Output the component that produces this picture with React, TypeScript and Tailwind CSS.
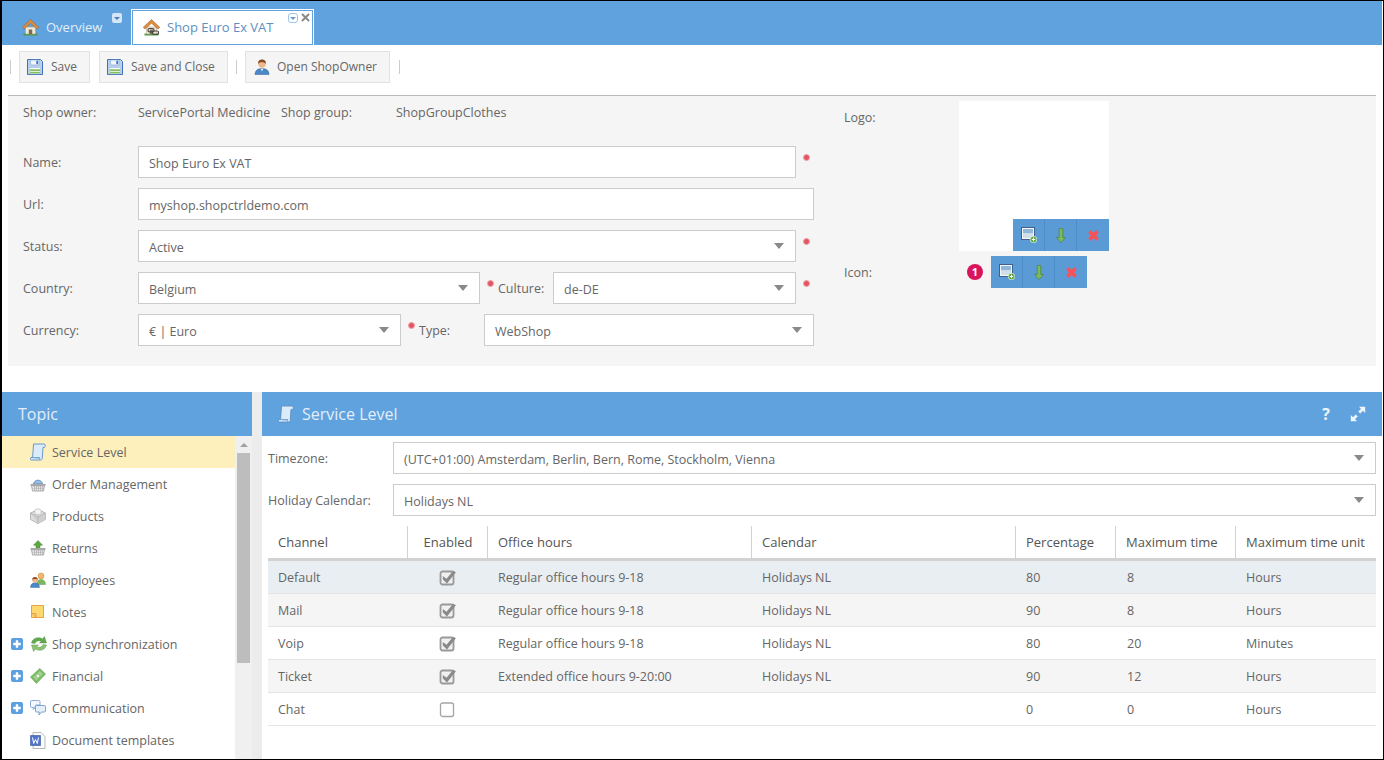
import React from "react";

const Home = ({ chain = false }: { chain?: boolean }) => (
  <svg width="17" height="17" viewBox="0 0 17 17" className="shrink-0">
    <path d="M1.500 14.500h14V16.500h-14z" fill="#4f9a3c" />
    <path d="M3.500 8h10v7h-10z" fill="#efe8d6" stroke="#a99a7e" strokeWidth=".5" />
    <path d="M6.800 10.500h3.400V15H6.800z" fill="#7d6c55" />
    <path d="M8.500 .5.300 8.300l1.600 1.800L8.500 4.200l6.600 5.900 1.600-1.800z" fill="#dd8f3f" stroke="#a5622a" strokeWidth=".6" />
    {chain && (
      <g fill="none" stroke="#4a4a4a" strokeWidth="1.200">
        <rect x="5" y="9.500" width="6" height="3.400" rx="1.400" />
        <rect x="9.500" y="12" width="6" height="3.400" rx="1.400" />
      </g>
    )}
  </svg>
);

const Floppy = () => (
  <svg width="16" height="16" viewBox="0 0 16 16" className="shrink-0">
    <path d="M.5.500h13l2 2v13H.5z" fill="#b9d2ee" stroke="#3f70b8" />
    <path d="M3.500 1h8.500v5H3.500z" fill="#f2f7fd" stroke="#7ea0d0" strokeWidth=".6" />
    <path d="M9.300 1.800h1.800v3.300H9.300z" fill="#3f70b8" />
    <path d="M2.500 8.500h11V15h-11z" fill="#fff" stroke="#8fb0da" strokeWidth=".5" />
    <path d="M3 10.200h10V12H3zM3 12.800h10V14.500H3z" fill="#84c062" />
  </svg>
);

const Person = () => (
  <svg width="16" height="16" viewBox="0 0 16 16" className="shrink-0">
    <path d="M1 15.500c0-4 2.700-6 7-6s7 2 7 6z" fill="#4a86c8" stroke="#2f5f9c" strokeWidth=".5" />
    <path d="M6.500 9.500 8 12.500l1.500-3z" fill="#e8eef6" />
    <circle cx="8" cy="5" r="3.700" fill="#eeb98a" />
    <path d="M4.200 5.200C3.800 1.600 6 .6 8 .6s4.200 1 3.800 4.600C11 3.600 9.500 3 8 3.300 6.500 3 5 3.600 4.200 5.200z" fill="#8a4a24" />
  </svg>
);

const Scroll = () => (
  <svg width="16" height="18" viewBox="0 0 16 18" className="shrink-0">
    <path d="M3.500 1H14c1.700 0 1.700 2.600.5 3.400H13L12.300 15.300c-.2 1.200-1 1.700-2 1.700H1.200c-1 0-1-2.200-.1-2.600H2.600z" fill="#dcebfa" stroke="#5b8ec6" strokeWidth=".9" />
    <path d="M1.200 14.500h8.600c-.6.800-.4 1.800 0 2.500" fill="#aecbec" stroke="#5b8ec6" strokeWidth=".7" />
  </svg>
);

const Basket = ({ up = false }: { up?: boolean }) => (
  <svg width="16" height="16" viewBox="0 0 16 16" className="shrink-0">
    {up ? (
      <path d="M8 .5 12.500 5.200H10V9H6V5.200H3.500z" fill="#5aa83f" stroke="#3f7d2b" strokeWidth=".5" />
    ) : (
      <path d="M3.500 8c.5-2.500 2.300-3.800 4.500-3.800S12 5.500 12.500 8z" fill="#9fbfe0" stroke="#5b8fc4" strokeWidth="1" />
    )}
    <path d="M.5 8h15v1.800H.5z" fill="#a9a9a9" />
    <path d="M1.500 9.800h13L13.500 15h-11z" fill="#ececec" stroke="#8d8d8d" strokeWidth=".7" />
    <path d="M4.500 10v5M6.500 10v5M8.500 10v5M10.500 10v5M12.500 10v5M2.500 12.300h11" stroke="#a5a5a5" strokeWidth=".6" />
  </svg>
);

const BoxIcon = () => (
  <svg width="16" height="16" viewBox="0 0 16 16" className="shrink-0">
    <path d="M8 1.500 15.500 5v6.500L8 15.500.5 11.500V5z" fill="#dfdfdf" stroke="#a8a8a8" strokeWidth=".8" />
    <path d="M.5 5 8 8.800 15.500 5V11.500L8 15.500z" fill="#cfcfcf" />
    <path d="M.5 5 8 8.800l7.500-3.800M8 8.800v6.700" fill="none" stroke="#acacac" strokeWidth=".7" />
    <path d="M4.800 2.800C4.800 1.500 6.300 1 8 1s3.200.5 3.200 1.800V5c0 1-1.500 1.700-3.200 1.700S4.800 6 4.800 5z" fill="#f4f4f4" stroke="#b0b0b0" strokeWidth=".6" />
  </svg>
);

const Employees = () => (
  <svg width="16" height="16" viewBox="0 0 16 16" className="shrink-0">
    <path d="M7 11.500c0-2.500 1.500-4 4-4s4 1.500 4.500 4v1H8z" fill="#7db860" stroke="#568c3f" strokeWidth=".4" />
    <circle cx="11" cy="4" r="3" fill="#efb86d" stroke="#c98a3a" strokeWidth=".5" />
    <path d="M.5 15.500c0-3 1.800-4.800 4.500-4.800s4.500 1.800 4.500 4.800z" fill="#4a86c8" stroke="#2f5f9c" strokeWidth=".4" />
    <circle cx="5" cy="8" r="2.800" fill="#eeb98a" />
    <path d="M2.200 8C2 6 3.500 5 5 5s3 1 2.800 3C7 6.800 3 6.800 2.200 8z" fill="#8a4a24" />
  </svg>
);

const Note = () => (
  <svg width="16" height="16" viewBox="0 0 16 16" className="shrink-0">
    <path d="M1.500 1.500h12v12h-12z" fill="#fbd96e" stroke="#e9a04a" />
    <path d="M2 9.500l4 4V9.500z" fill="#f9c48a" stroke="#e0872e" strokeWidth=".6" />
  </svg>
);

const Sync = () => (
  <svg width="18" height="16" viewBox="0 0 18 16" className="shrink-0">
    <path d="M1.500 7C2.500 3 6 1.500 9 1.800c1.500 0 2.500.5 3.500 1.200L14.500.5 16.500 7H9.500l1.700-1.800C9 4 5.500 5 5 7.500z" fill="#62a94e" stroke="#4a8c3a" strokeWidth=".4" />
    <path d="M16.500 9c-1 4-4.500 5.500-7.500 5.200-1.500 0-2.500-.5-3.500-1.200L3.500 15.500 1.500 9h7L6.800 10.800C9 12 12.500 11 13 8.500z" fill="#8cc474" stroke="#4a8c3a" strokeWidth=".4" />
  </svg>
);

const Money = () => (
  <svg width="16" height="16" viewBox="0 0 17 17" className="shrink-0">
    <path d="M.5 9.500 10.500.5l6 6L6.800 16.500z" fill="#7fbe6a" stroke="#5d9c4a" strokeWidth=".6" />
    <path d="M3 9.500l7.500-6.800 3.700 3.700-7.500 7.500z" fill="#a3d590" stroke="#6fae5a" strokeWidth=".6" />
    <circle cx="8.500" cy="8.500" r="2" fill="#e8f6e0" stroke="#5d9c4a" strokeWidth=".5" />
  </svg>
);

const Chat = () => (
  <svg width="16" height="16" viewBox="0 0 16 16" className="shrink-0">
    <path d="M1.800.5h7c.8 0 1.200.5 1.200 1.200V5H6.500C5.500 5 5 5.500 5 6.500V8L3 9.500 3.500 7.500H1.800C1 7.500.5 7 .5 6.300V1.700C.5 1 1 .5 1.800.5z" fill="#f4f8fd" stroke="#6f9bcb" strokeWidth=".8" />
    <path d="M6.500 5.500h8c.6 0 1 .4 1 1v4.500c0 .6-.4 1-1 1h-3l-2.500 3 .3-3H6.500c-.6 0-1-.4-1-1V6.500c0-.6.4-1 1-1z" fill="#e4eff9" stroke="#5f8fc4" strokeWidth=".8" />
  </svg>
);

const DocIcon = () => (
  <svg width="16" height="17" viewBox="0 0 16 17" className="shrink-0">
    <path d="M3 .5h8l4 4v12H3z" fill="#fafafa" stroke="#b8b8b8" />
    <path d="M.5 3.500h10v10H.5z" fill="#4f74c9" stroke="#34539c" strokeWidth=".6" />
    <path d="M2.500 5.500l1.200 6 1.800-4 1.800 4 1.200-6" fill="none" stroke="#fff" strokeWidth="1" />
  </svg>
);

const Plus = () => (
  <svg width="12" height="12" viewBox="0 0 12 12" className="shrink-0">
    <rect width="12" height="12" rx="2" fill="#5b9fe0" />
    <path d="M4.800 2.200h2.400v2.600h2.600v2.400H7.200v2.600H4.800V7.200H2.200V4.800h2.600z" fill="#fff" />
  </svg>
);

const ImageAdd = () => (
  <svg width="16" height="16" viewBox="0 0 16 16">
    <rect x=".5" y=".5" width="13" height="12" fill="#f4f8fc" stroke="#3e5f8f" />
    <rect x="2" y="2" width="10" height="4.500" fill="#8fb7da" />
    <rect x="2" y="6.500" width="10" height="4.500" fill="#d2dfe8" />
    <circle cx="12.500" cy="12.500" r="3.300" fill="#5aa83f" stroke="#fff" strokeWidth=".6" />
    <path d="M12 10.800h1v1.200h1.200v1H13v1.200h-1V13h-1.200v-1H12z" fill="#fff" />
  </svg>
);

const DownArrow = () => (
  <svg width="10" height="15" viewBox="0 0 10 15">
    <path d="M3.200.5h3.600V9.500H9.500L5 14.500.5 9.500h2.700z" fill="#7cba5c" stroke="#3f7d2b" strokeWidth=".6" />
  </svg>
);

const RedX = () => (
  <svg width="11" height="11" viewBox="0 0 11 11">
    <path d="M2.500.2 5.500 2.800 8.500.2l2.300 2.300L8.200 5.500l2.600 3-2.300 2.300-3-2.600-3 2.600L.2 8.500l2.600-3L.2 2.500z" fill="#f5525a" />
  </svg>
);

const Caret = () => (
  <svg width="10" height="6" viewBox="0 0 10 6" className="shrink-0">
    <path d="M0 0h10L5 6z" fill="#8a8a8a" />
  </svg>
);

const Dot = ({ className = "" }: { className?: string }) => (
  <span className={`block w-[7px] h-[7px] rounded-full bg-[#e35563] border border-[#f2a0a6] self-start mt-[8px] shrink-0 ${className}`} />
);

const Field = ({ text, w, select = false }: { text: string; w: string; select?: boolean }) => (
  <div className={`${w} h-[32px] bg-white border border-[#cccccc] flex items-center justify-between pl-[10px] pr-[11px] shrink-0`}>
    <span className="pt-[4px]">{text}</span>
    {select && <Caret />}
  </div>
);

const Label = ({ text, w }: { text: string; w: string }) => (
  <div className={`${w} h-[32px] flex items-center shrink-0`}>
    <span className="pt-[2px]">{text}</span>
  </div>
);

const ToolSep = ({ className = "" }: { className?: string }) => <span className={`block w-px h-[14px] mt-[9px] bg-[#cccccc] ${className}`} />;

const ToolBtn = ({ icon, text, className }: { icon: React.ReactNode; text: string; className: string }) => (
  <div className={`h-[32px] bg-[#f5f5f5] border border-[#e2e2e2] flex items-center text-[12px] ${className}`}>
    {icon}
    <span>{text}</span>
  </div>
);

const ImgButtons = () => (
  <div className="flex bg-[#5b9bd5] h-[32px] w-[96px]">
    <div className="w-[32px] flex items-center justify-center border-r border-[#4f8dc8]"><ImageAdd /></div>
    <div className="w-[32px] flex items-center justify-center border-r border-[#4f8dc8]"><DownArrow /></div>
    <div className="w-[32px] flex items-center justify-center"><RedX /></div>
  </div>
);

const CheckIcon = ({ on }: { on: boolean }) => (
  <svg width="17" height="17" viewBox="0 0 17 17" className="block ml-[31px]">
    <rect x="1.500" y={on ? 2.5 : 2} width="13" height={on ? 13 : 13.5} rx="2" fill={on ? "#f0f0f0" : "#ffffff"} stroke={on ? "#999999" : "#a5a5a5"} strokeWidth={on ? 1.8 : 1.3} />
    {on && <path d="M3.800 7 7.500 9.800 14.200 1.800 16.900 3.200 8 14.500 3.800 10.500z" fill="#8a8a8a" />}
  </svg>
);

const topics: { text: string; icon: React.ReactNode; plus?: boolean; active?: boolean }[] = [
  { text: "Service Level", icon: <Scroll />, active: true },
  { text: "Order Management", icon: <Basket /> },
  { text: "Products", icon: <BoxIcon /> },
  { text: "Returns", icon: <Basket up /> },
  { text: "Employees", icon: <Employees /> },
  { text: "Notes", icon: <Note /> },
  { text: "Shop synchronization", icon: <Sync />, plus: true },
  { text: "Financial", icon: <Money />, plus: true },
  { text: "Communication", icon: <Chat />, plus: true },
  { text: "Document templates", icon: <DocIcon /> },
];

const rows = [
  ["Default", true, "Regular office hours 9-18", "Holidays NL", "80", "8", "Hours"],
  ["Mail", true, "Regular office hours 9-18", "Holidays NL", "90", "8", "Hours"],
  ["Voip", true, "Regular office hours 9-18", "Holidays NL", "80", "20", "Minutes"],
  ["Ticket", true, "Extended office hours 9-20:00", "Holidays NL", "90", "12", "Hours"],
  ["Chat", false, "", "", "0", "0", "Hours"],
] as const;

const heads = ["Channel", "Enabled", "Office hours", "Calendar", "Percentage", "Maximum time", "Maximum time unit"];
const widths = [140, 80, 264, 264, 100, 120, 140];

export default function App() {
  return (
    <div className="w-[1384px] h-[760px] overflow-hidden bg-white border-l-2 border-t border-r border-b border-black flex flex-col text-[12.5px] leading-[16px] text-[#666666] font-['Open_Sans',sans-serif]">
      {/* tab strip */}
      <div className="h-[44px] mr-px bg-[#5fa2dd] flex items-end shrink-0 relative">
        <div className="w-[130px] h-[35px] flex items-center gap-[7px] pl-[20px] text-[#e3eefa] text-[13px] relative">
          <Home />
          <span className="pb-[2px]">Overview</span>
          <span className="absolute left-[110px] top-[3px] w-[10px] h-[10px] rounded-[2px] bg-[#d4e5f6] flex items-center justify-center">
            <span className="block w-0 h-0 border-l-[3px] border-r-[3px] border-t-[3px] border-l-transparent border-r-transparent border-t-[#4c7fb5]" />
          </span>
        </div>
        <div className="w-[181px] h-[35px] bg-white border border-[#5fa2dd] outline outline-1 outline-white flex items-center gap-[7px] pl-[10px] text-[#5d8fc0] text-[13px] relative">
          <Home chain />
          <span className="pb-[2px]">Shop Euro Ex VAT</span>
          <span className="absolute left-[155px] top-[2px] w-[10px] h-[10px] rounded-[3px] bg-white border border-[#9cc3e8] flex items-center justify-center">
            <span className="block w-0 h-0 border-l-[3px] border-r-[3px] border-t-[3px] border-l-transparent border-r-transparent border-t-[#6d9ccc]" />
          </span>
          <svg width="9" height="9" viewBox="0 0 9 9" className="absolute left-[168px] top-[2px]">
            <path d="M1 1l7 7M8 1l-7 7" stroke="#8a8a8a" strokeWidth="2" />
          </svg>
        </div>
      </div>

      {/* toolbar */}
      <div className="h-[50px] flex items-start pt-[6px] pl-[8px] shrink-0">
        <ToolSep />
        <ToolBtn className="w-[71px] ml-[8px] pl-[7px] gap-[8px]" icon={<Floppy />} text="Save" />
        <ToolBtn className="w-[129px] ml-[9px] pl-[7px] gap-[8px]" icon={<Floppy />} text="Save and Close" />
        <ToolSep className="ml-[8px]" />
        <ToolBtn className="w-[145px] ml-[8px] pl-[8px] gap-[7px]" icon={<Person />} text="Open ShopOwner" />
        <ToolSep className="ml-[9px]" />
      </div>

      {/* form panel */}
      <div className="ml-[6px] w-[1368px] h-[271px] bg-[#f5f5f5] border-t border-[#bbbbbb] flex shrink-0">
        <div className="w-[836px] pl-[15px] flex flex-col shrink-0">
          <div className="flex h-[32px] mb-[18px]">
            <Label text="Shop owner:" w="w-[115px]" />
            <Label text="ServicePortal Medicine" w="w-[143px]" />
            <Label text="Shop group:" w="w-[115px]" />
            <Label text="ShopGroupClothes" w="w-[150px]" />
          </div>
          <div className="flex h-[32px] mb-[10px]">
            <Label text="Name:" w="w-[115px]" />
            <Field text="Shop Euro Ex VAT" w="w-[658px]" />
            <Dot className="ml-[7px]" />
          </div>
          <div className="flex h-[32px] mb-[10px]">
            <Label text="Url:" w="w-[115px]" />
            <Field text="myshop.shopctrldemo.com" w="w-[676px]" />
          </div>
          <div className="flex h-[32px] mb-[10px]">
            <Label text="Status:" w="w-[115px]" />
            <Field text="Active" w="w-[658px]" select />
            <Dot className="ml-[7px]" />
          </div>
          <div className="flex h-[32px] mb-[10px]">
            <Label text="Country:" w="w-[115px]" />
            <Field text="Belgium" w="w-[342px]" select />
            <Dot className="ml-[7px]" />
            <Label text="Culture:" w="w-[55px] ml-[4px]" />
            <Field text="de-DE" w="w-[243px]" select />
            <Dot className="ml-[7px]" />
          </div>
          <div className="flex h-[32px]">
            <Label text="Currency:" w="w-[115px]" />
            <Field text="€ | Euro" w="w-[263px]" select />
            <Dot className="ml-[7px]" />
            <Label text="Type:" w="w-[65px] ml-[4px]" />
            <Field text="WebShop" w="w-[330px]" select />
          </div>
        </div>
        <div className="flex flex-col pt-[5px]">
          <div className="flex">
            <Label text="Logo:" w="w-[115px]" />
            <div className="w-[150px] h-[150px] bg-white flex items-end justify-end">
              <ImgButtons />
            </div>
          </div>
          <div className="flex items-center mt-[5px]">
            <Label text="Icon:" w="w-[115px]" />
            <span className="ml-[8px] w-[16px] h-[16px] rounded-full bg-[#d9145c] text-white text-[11px] font-bold flex items-center justify-center">1</span>
            <div className="ml-[8px]"><ImgButtons /></div>
          </div>
        </div>
      </div>

      {/* bottom */}
      <div className="mt-[26px] flex flex-1 min-h-0 mr-px">
        <div className="w-[250px] flex flex-col shrink-0">
          <div className="h-[44px] bg-[#5fa2dd] flex items-center pl-[16px] text-[16px] text-[#e3eefa] shrink-0">Topic</div>
          <div className="flex flex-1 min-h-0 overflow-hidden">
            <div className="w-[233px] shrink-0">
              {topics.map((t) => (
                <div key={t.text} className={`h-[32px] flex items-center ${t.active ? "bg-[#fdf0bd]" : ""}`}>
                  <div className="w-[28px] pl-[9px] shrink-0">{t.plus && <Plus />}</div>
                  <div className="w-[22px] shrink-0">{t.icon}</div>
                  <span className="pt-[2px]">{t.text}</span>
                </div>
              ))}
            </div>
            <div className="w-[17px] bg-[#f0f0f0] flex flex-col items-center shrink-0">
              <div className="h-[17px] flex items-center justify-center">
                <span className="block w-0 h-0 border-l-[4px] border-r-[4px] border-b-[4px] border-l-transparent border-r-transparent border-b-[#a0a0a0]" />
              </div>
              <div className="w-[13px] h-[210px] bg-[#bdbdbd]" />
            </div>
          </div>
        </div>
        <div className="w-[10px] bg-[#ececec] shrink-0" />
        <div className="flex-1 flex flex-col min-w-0">
          <div className="h-[44px] bg-[#5fa2dd] flex items-center pl-[16px] pr-[16px] text-[16px] text-[#e3eefa] shrink-0">
            <Scroll />
            <span className="ml-[8px]">Service Level</span>
            <span className="ml-auto mr-[2px] font-bold text-[16px] text-[#eef5fc]">?</span>
            <svg width="16" height="16" viewBox="0 0 16 16" className="ml-[18px]">
              <path d="M9 .8h6.200V7l-2.200-2.200-2.800 2.800-2-2L11 3zM7 15.200H.8V9L3 11.200l2.800-2.800 2 2L5 13z" fill="#eef5fc" />
            </svg>
          </div>
          <div className="pl-[6px] pr-[6px] pt-[6px]">
            <div className="flex items-center h-[32px] mb-[10px]">
              <div className="w-[125px] shrink-0 pt-[2px]">Timezone:</div>
              <Field text="(UTC+01:00) Amsterdam, Berlin, Bern, Rome, Stockholm, Vienna" w="w-[983px]" select />
            </div>
            <div className="flex items-center h-[32px] mb-[10px]">
              <div className="w-[125px] shrink-0 pt-[2px]">Holiday Calendar:</div>
              <Field text="Holidays NL" w="w-[983px]" select />
            </div>
            <table className="table-fixed border-separate border-spacing-0 w-[1108px]">
              <colgroup>
                {widths.map((w, i) => (
                  <col key={i} style={{ width: w }} />
                ))}
              </colgroup>
              <thead>
                <tr>
                  {heads.map((h, i) => (
                    <th key={h} className={`h-[35px] p-0 font-normal text-[13px] text-[#555555] relative border-b-[3px] border-[#d2d2d2] ${i === 1 ? "text-center" : "text-left pl-[10px]"}`}>
                      {h}
                      {i < 6 && <span className="absolute right-0 top-0 bottom-0 w-px bg-[#d2d2d2]" />}
                    </th>
                  ))}
                </tr>
              </thead>
              <tbody>
                {rows.map((r, i) => {
                  const bg = i === 0 ? "bg-[#e9eef3]" : i % 2 === 1 ? "bg-[#f5f5f5]" : "bg-white";
                  const cell = `h-[33px] p-0 border-b border-[#e4e4e4] ${bg}`;
                  return (
                    <tr key={r[0]}>
                      <td className={`${cell} pl-[10px] pt-[2px]`}>{r[0]}</td>
                      <td className={cell}><CheckIcon on={r[1]} /></td>
                      <td className={`${cell} pl-[10px] pt-[2px]`}>{r[2]}</td>
                      <td className={`${cell} pl-[10px] pt-[2px]`}>{r[3]}</td>
                      <td className={`${cell} pl-[10px] pt-[2px]`}>{r[4]}</td>
                      <td className={`${cell} pl-[11px] pt-[2px]`}>{r[5]}</td>
                      <td className={`${cell} pl-[10px] pt-[2px]`}>{r[6]}</td>
                    </tr>
                  );
                })}
              </tbody>
            </table>
          </div>
        </div>
      </div>
    </div>
  );
}
